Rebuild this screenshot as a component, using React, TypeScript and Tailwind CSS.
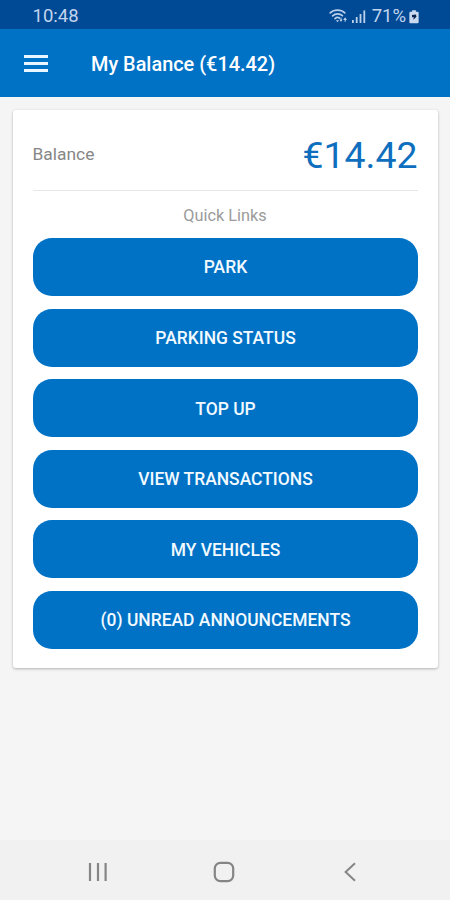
const quickLinks = [
  "PARK",
  "PARKING STATUS",
  "TOP UP",
  "VIEW TRANSACTIONS",
  "MY VEHICLES",
  "(0) UNREAD ANNOUNCEMENTS",
]

const StatusIcons = () => (
  <svg width="38" height="18" viewBox="0 0 38 18" fill="none" className="text-[#b9cfea]">
    <g stroke="currentColor" strokeWidth="1.7" strokeLinecap="round">
      <path d="M1.2 4.8C5 1.2 12 1.2 15.8 4.8" />
      <path d="M3.6 7.8C6.4 5.2 10.8 5.2 13.4 7.6" />
      <path d="M6 10.6C7.4 9.4 9 9.2 10.4 10" />
    </g>
    <path d="M6.8 12.2h3.4l-1.7 2z" fill="currentColor" />
    <path d="M10.4 11.6h1.1V9.4h1v2.2h1.1l-1.6 2.4zM14.2 12l1.9-2.8 1.9 2.8h-1.3v1.8h-1.1V12z" fill="currentColor" />
    <g fill="currentColor">
      <rect x="23" y="12" width="1.8" height="3" />
      <rect x="26.8" y="9" width="1.8" height="6" />
      <rect x="30.6" y="6" width="1.8" height="9" />
      <rect x="34.4" y="2.4" width="1.8" height="12.6" />
    </g>
  </svg>
)

const BatteryIcon = () => (
  <svg width="10" height="14" viewBox="0 0 11 15">
    <path d="M3.4 0h4.2v1.8h1.9c.7 0 1.1.4 1.1 1.1v10.4c0 .7-.4 1.1-1.1 1.1h-8c-.7 0-1.1-.4-1.1-1.1V2.9c0-.7.4-1.1 1.1-1.1h1.9z" fill="#c9d9ee" />
    <path d="M3.2 5.4l4.4-.6.6 2.4-3.4 3.4.4-2.8H3.4z" fill="#0a2450" />
  </svg>
)

const StatusBar = () => (
  <div className="flex h-[29px] shrink-0 items-center justify-between bg-[#004995] pt-[4px] pr-[31px] pl-[32.5px] text-[18.5px] text-[#c3d5ed]">
    <span>10:48</span>
    <div className="flex items-center">
      <StatusIcons />
      <span className="mr-[3px] ml-[5px]">71%</span>
      <BatteryIcon />
    </div>
  </div>
)

const Header = () => (
  <header className="flex h-[68px] shrink-0 items-center bg-[#0072c6] pl-[23.5px] text-white">
    <button aria-label="Menu" className="flex h-[17px] w-[24px] flex-col justify-between">
      <span className="h-[3px] w-full bg-[#eaf6ff]" />
      <span className="h-[3px] w-full bg-[#eaf6ff]" />
      <span className="h-[3px] w-full bg-[#eaf6ff]" />
    </button>
    <h1 className="ml-[43.5px] pt-[4px] text-[19.9px] font-medium">My Balance (€14.42)</h1>
  </header>
)

const BalanceCard = () => (
  <section className="mx-[12.5px] mt-[13px] h-[558px] rounded-[3px] bg-white px-5 shadow-[0_1px_3px_rgba(0,0,0,0.28)]">
    <div className="flex h-[81px] items-center justify-between border-b border-[#e6e6e6] pt-[10px]">
      <span className="pb-[2px] text-[17.4px] text-[#868686]">Balance</span>
      <span className="text-[37.4px] text-[#0f6fbe]">€14.42</span>
    </div>
    <p className="flex h-[47px] items-center justify-center pt-[3px] text-[16.3px] text-[#9b9b9b]">Quick Links</p>
    <div className="flex flex-col gap-[12.6px]">
      {quickLinks.map((label) => (
        <button
          key={label}
          className="h-[58px] w-full rounded-[19px] bg-[#0072c6] pt-px pl-px text-[17.45px] font-medium text-[#f2faff]"
        >
          {label}
        </button>
      ))}
    </div>
  </section>
)

const NavigationBar = () => (
  <nav className="mt-auto flex h-[60px] shrink-0 items-center bg-[#f1f1f1] pt-[3px] pl-[88px]">
    <svg width="20" height="20" viewBox="0 0 20 20" stroke="#858585" strokeWidth="2.2">
      <path d="M2 1v18M10 1v18M17.6 1v18" />
    </svg>
    <svg width="22" height="22" viewBox="0 0 22 22" fill="none" stroke="#858585" strokeWidth="2.2" className="ml-[105px]">
      <rect x="1.8" y="1.8" width="18.4" height="18.4" rx="5.6" />
    </svg>
    <svg width="12" height="20" viewBox="0 0 12 20" fill="none" stroke="#858585" strokeWidth="2" className="ml-[109px]">
      <path d="M11 1.2L1.6 10l9.4 8.8" />
    </svg>
  </nav>
)

export default function App() {
  return (
    <div className="flex h-[900px] w-[450px] flex-col overflow-hidden bg-[#f5f5f5] font-['Roboto',sans-serif]">
      <StatusBar />
      <Header />
      <BalanceCard />
      <NavigationBar />
    </div>
  )
}
